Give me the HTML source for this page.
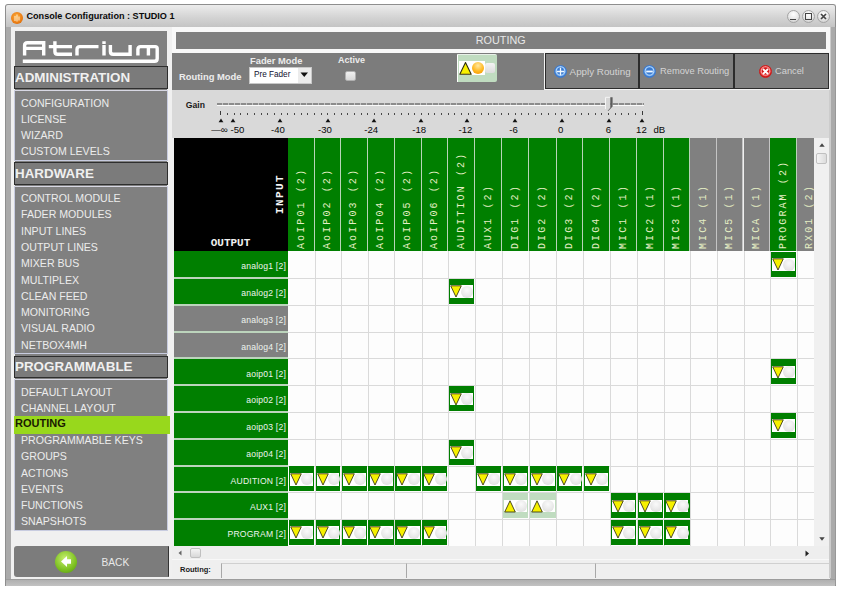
<!DOCTYPE html><html><head><meta charset="utf-8"><style>
html,body{margin:0;padding:0;}
body{width:842px;height:594px;overflow:hidden;position:relative;background:#fff;font-family:"Liberation Sans",sans-serif;}
div{position:absolute;box-sizing:border-box;}
.t{white-space:nowrap;line-height:1;}
</style></head><body>
<div style="left:5px;top:4px;width:831px;height:582px;background:#aaaaaa;border:1px solid #8e8e8e;border-bottom:0;border-radius:3px 3px 0 0;"></div>
<div style="left:6px;top:5px;width:829px;height:22px;background:linear-gradient(#ececec,#d2d2d2 60%,#c4c4c4);border-radius:2px 2px 0 0;"></div>
<div style="left:11px;top:27px;width:819px;height:552px;background:#f0f0f0;"></div>
<div style="left:6px;top:579px;width:829px;height:7px;background:linear-gradient(#9c9c9c 0 1px,#b0b0b0 1px,#c2c2c2);"></div>
<div style="left:829px;top:27px;width:1.5px;height:551px;background:#cccccc;"></div>
<div style="left:834.5px;top:27px;width:1px;height:558px;background:#989898;"></div>
<div style="left:11px;top:11.5px;width:12px;height:12px;border-radius:50%;background:radial-gradient(circle at 45% 40%,#ffb040,#e87810 65%,#b85800);"></div>
<svg style="position:absolute;left:11px;top:11.5px" width="12" height="12"><path d="M4 4V9M6 2.5V9.5M8 4.5V8.5" stroke="#fff4e0" stroke-width="1.1" opacity="0.85"/></svg>
<div class="t" style="left:26.5px;top:12px;font-weight:bold;font-size:9.1px;color:#0a0a0a;">Console Configuration : STUDIO 1</div>
<div style="left:786.5px;top:9.5px;width:13px;height:13px;border-radius:50%;background:radial-gradient(circle at 50% 30%,#ffffff,#e6e6e6 55%,#c4c4c4);border:1px solid #a4a4a4;"></div>
<div style="left:802.0px;top:9.5px;width:13px;height:13px;border-radius:50%;background:radial-gradient(circle at 50% 30%,#ffffff,#e6e6e6 55%,#c4c4c4);border:1px solid #a4a4a4;"></div>
<div style="left:817.0px;top:9.5px;width:13px;height:13px;border-radius:50%;background:radial-gradient(circle at 50% 30%,#ffffff,#e6e6e6 55%,#c4c4c4);border:1px solid #a4a4a4;"></div>
<div style="left:790.3px;top:18.5px;width:5.5px;height:1.6px;background:#444;"></div>
<div style="left:805px;top:13px;width:7px;height:6.5px;border:1.2px solid #444;border-top-width:1.8px;"></div>
<svg style="position:absolute;left:819px;top:11.5px" width="9" height="9"><path d="M2 2L7 7M7 2L2 7" stroke="#444" stroke-width="1.7"/></svg>
<div style="left:15px;top:31px;width:152px;height:500px;background:#808080;"></div>
<svg style="position:absolute;left:14px;top:31px" width="154" height="36" viewBox="14 31 154 36">
<g fill="none" stroke="#fff" stroke-width="3.4" stroke-linecap="butt">
<path d="M24.6 55.6V45.6Q24.6 42.8 27.4 42.8H43.7V55.6M24.6 48.4H43.7"/>
<path d="M48.8 46.6H72M54.9 41.2V51.4Q54.9 54.2 57.7 54.2H72"/>
<path d="M77 55.6V49.4Q77 46.6 79.8 46.6H98.5"/>
<path d="M104 45V55.6M104 41.2V44.1"/>
<path d="M110.4 45V51.4Q110.4 54.2 113.2 54.2H130.1V45"/>
<path d="M137.9 55.6V49.4Q137.9 46.6 140.7 46.6H155.2Q157.2 46.6 157.2 48.6V58.4Q157.2 61.2 154.4 61.2H22.8M148.4 46.6V55.6"/>
</g></svg>
<div style="left:14px;top:66px;width:154px;height:22.5px;background:#7b7b7b;border:1px solid #2e2e2e;"></div>
<div class="t" style="left:15px;top:70.6px;font-weight:bold;font-size:13.4px;color:#f0f0f0;">ADMINISTRATION</div>
<div style="left:14px;top:90px;width:154px;height:71px;background:#808080;border:1px solid #c8cce0;border-top-color:#d8d8e4;"></div>
<div style="left:14px;top:162px;width:154px;height:22.5px;background:#7b7b7b;border:1px solid #2e2e2e;"></div>
<div class="t" style="left:15px;top:166.6px;font-weight:bold;font-size:13.4px;color:#f0f0f0;">HARDWARE</div>
<div style="left:14px;top:186px;width:154px;height:168px;background:#808080;border:1px solid #c8cce0;border-top-color:#d8d8e4;"></div>
<div style="left:14px;top:355.5px;width:154px;height:22.5px;background:#7b7b7b;border:1px solid #2e2e2e;"></div>
<div class="t" style="left:15px;top:360.1px;font-weight:bold;font-size:13.4px;color:#f0f0f0;">PROGRAMMABLE</div>
<div style="left:14px;top:379px;width:154px;height:152px;background:#808080;border:1px solid #c8cce0;border-top-color:#d8d8e4;"></div>
<div class="t" style="left:21px;top:97.8px;font-size:10.6px;color:#ececec;">CONFIGURATION</div>
<div class="t" style="left:21px;top:113.94999999999999px;font-size:10.6px;color:#ececec;">LICENSE</div>
<div class="t" style="left:21px;top:130.1px;font-size:10.6px;color:#ececec;">WIZARD</div>
<div class="t" style="left:21px;top:146.25px;font-size:10.6px;color:#ececec;">CUSTOM LEVELS</div>
<div class="t" style="left:21px;top:193.1px;font-size:10.6px;color:#ececec;">CONTROL MODULE</div>
<div class="t" style="left:21px;top:209.38px;font-size:10.6px;color:#ececec;">FADER MODULES</div>
<div class="t" style="left:21px;top:225.66px;font-size:10.6px;color:#ececec;">INPUT LINES</div>
<div class="t" style="left:21px;top:241.94px;font-size:10.6px;color:#ececec;">OUTPUT LINES</div>
<div class="t" style="left:21px;top:258.22px;font-size:10.6px;color:#ececec;">MIXER BUS</div>
<div class="t" style="left:21px;top:274.5px;font-size:10.6px;color:#ececec;">MULTIPLEX</div>
<div class="t" style="left:21px;top:290.78000000000003px;font-size:10.6px;color:#ececec;">CLEAN FEED</div>
<div class="t" style="left:21px;top:307.06000000000006px;font-size:10.6px;color:#ececec;">MONITORING</div>
<div class="t" style="left:21px;top:323.34000000000003px;font-size:10.6px;color:#ececec;">VISUAL RADIO</div>
<div class="t" style="left:21px;top:339.62px;font-size:10.6px;color:#ececec;">NETBOX4MH</div>
<div class="t" style="left:21px;top:386.70000000000005px;font-size:10.6px;color:#ececec;">DEFAULT LAYOUT</div>
<div class="t" style="left:21px;top:402.88000000000005px;font-size:10.6px;color:#ececec;">CHANNEL LAYOUT</div>
<div style="left:14px;top:416px;width:156px;height:17.5px;background:#98d81c;"></div>
<div class="t" style="left:15px;top:418.16px;font-size:11px;font-weight:bold;color:#1a1a00;">ROUTING</div>
<div class="t" style="left:21px;top:435.24000000000007px;font-size:10.6px;color:#ececec;">PROGRAMMABLE KEYS</div>
<div class="t" style="left:21px;top:451.4200000000001px;font-size:10.6px;color:#ececec;">GROUPS</div>
<div class="t" style="left:21px;top:467.6px;font-size:10.6px;color:#ececec;">ACTIONS</div>
<div class="t" style="left:21px;top:483.78000000000003px;font-size:10.6px;color:#ececec;">EVENTS</div>
<div class="t" style="left:21px;top:499.96000000000004px;font-size:10.6px;color:#ececec;">FUNCTIONS</div>
<div class="t" style="left:21px;top:516.14px;font-size:10.6px;color:#ececec;">SNAPSHOTS</div>
<div style="left:14px;top:546px;width:155px;height:31px;background:#7c7c7c;border-right:1.5px solid #343434;border-radius:3px 1px 1px 3px;"></div>
<div style="left:55px;top:550.5px;width:22px;height:22px;border-radius:50%;background:radial-gradient(circle at 45% 35%,#c8f070,#7cc020 60%,#4e9010);"></div>
<svg style="position:absolute;left:58px;top:553px" width="16" height="17"><path d="M3 8.5L9 3V6.2H13V10.8H9V14Z" fill="#fff"/></svg>
<div class="t" style="left:101.5px;top:557.8px;font-size:10.2px;color:#e8e8e8;">BACK</div>
<div style="left:172px;top:27px;width:658px;height:25.5px;background:#f8f8f8;"></div>
<div style="left:176px;top:31.5px;width:650px;height:17px;background:#7f7f7f;"></div>
<div class="t" style="left:475.8px;top:34.5px;font-size:10.8px;color:#e8e8e8;">ROUTING</div>
<div style="left:172px;top:52.5px;width:657px;height:37.5px;background:#7c7c7c;"></div>
<div class="t" style="left:179px;top:72px;font-weight:bold;font-size:9.4px;color:#ececec;">Routing Mode</div>
<div class="t" style="left:250px;top:57px;font-weight:bold;font-size:9.35px;color:#ececec;">Fader Mode</div>
<div style="left:249px;top:66.5px;width:63px;height:17.5px;background:#fff;border:1px solid #c8c8c8;"></div>
<div style="left:297.5px;top:67.5px;width:13.5px;height:15.5px;background:#ececec;"></div>
<svg style="position:absolute;left:300px;top:72px" width="9" height="6"><path d="M0.5 0.5H8L4.25 5Z" fill="#111"/></svg>
<div class="t" style="left:254px;top:71px;font-size:8.2px;color:#101030;">Pre Fader</div>
<div class="t" style="left:338px;top:56px;font-weight:bold;font-size:9px;color:#ececec;">Active</div>
<div style="left:345px;top:70.8px;width:10.5px;height:10px;background:linear-gradient(#f0f0f0,#d8d8d8);border-radius:2px;border:1px solid #b0b0b0;"></div>
<div style="left:456.5px;top:54.2px;width:40.5px;height:28.2px;background:#c0dcc0;border-left:1.5px solid #fff;border-top:1px solid #e8f0e8;border-radius:0 2px 2px 0;"></div>
<div style="left:459px;top:61.4px;width:25.6px;height:13.4px;background:#fff;"></div>
<svg style="position:absolute;left:458px;top:61px" width="40" height="15"><path d="M7.5 1.5L13.2 13.3H1.8Z" fill="#f8f000" stroke="#303010" stroke-width="1.1" stroke-linejoin="round"/></svg>
<div style="left:472.4px;top:61.6px;width:12px;height:12px;border-radius:50%;background:radial-gradient(circle at 50% 30%,#ffe8a0,#ffb820 55%,#f09000);"></div>
<div style="left:485.3px;top:63.4px;width:9.8px;height:9.8px;background:linear-gradient(#f4f4f4,#dcdcdc);border-radius:2px;"></div>
<div style="left:543.5px;top:52.2px;width:286px;height:37.5px;background:#f4f4f4;"></div>
<div style="left:545px;top:53.4px;width:94px;height:36px;background:#7f7f7f;border:1.5px solid #2c2c2c;"></div>
<div style="left:639px;top:53.4px;width:95px;height:36px;background:#7f7f7f;border:1.5px solid #2c2c2c;"></div>
<div style="left:734px;top:53.4px;width:95px;height:36px;background:#7f7f7f;border:1.5px solid #2c2c2c;"></div>
<div style="left:553.5px;top:64.6px;width:13px;height:13px;border-radius:50%;background:radial-gradient(circle at 50% 45%,#3a7ad0 0 38%,#b0d8ff 52%,#3a7ad0 70%);border:1px solid #3a7ad0;"></div>
<svg style="position:absolute;left:553.5px;top:64.6px" width="13" height="13"><path d="M6.5 2.8V10.2M2.8 6.5H10.2" stroke="#f0f8ff" stroke-width="1.3"/></svg>
<div class="t" style="left:569.6px;top:66.5px;font-size:9.8px;color:#d4d4d4;">Apply Routing</div>
<div style="left:643.1px;top:64.6px;width:13px;height:13px;border-radius:50%;background:radial-gradient(circle at 50% 45%,#3a7ad0 0 38%,#b0d8ff 52%,#3a7ad0 70%);border:1px solid #3a7ad0;"></div>
<svg style="position:absolute;left:643.1px;top:64.6px" width="13" height="13"><path d="M3.2 6.5H9.8" stroke="#f0f8ff" stroke-width="1.8"/></svg>
<div class="t" style="left:660px;top:66.8px;font-size:9.3px;color:#d4d4d4;">Remove Routing</div>
<div style="left:758.5px;top:64.6px;width:13px;height:13px;border-radius:50%;background:radial-gradient(circle at 50% 45%,#d01818 0 38%,#ff9a9a 52%,#d01818 70%);border:1px solid #d01818;"></div>
<svg style="position:absolute;left:758.5px;top:64.6px" width="13" height="13"><path d="M4 4L9 9M9 4L4 9" stroke="#fff" stroke-width="1.8"/></svg>
<div class="t" style="left:775px;top:66.8px;font-size:9.3px;color:#d4d4d4;">Cancel</div>
<div style="left:172px;top:90px;width:657px;height:47.5px;background:#d9d9d9;"></div>
<div class="t" style="left:185.8px;top:100.8px;font-weight:bold;font-size:8.6px;color:#1a1a1a;">Gain</div>
<div style="left:217px;top:103px;width:427px;height:1.5px;background:repeating-linear-gradient(90deg,#8c8c8c 0 5px,#c4c4c4 5px 6px);"></div>
<div style="left:217px;top:104.5px;width:427px;height:1.5px;background:#fafafa;"></div>
<div style="left:220px;top:110.5px;width:1px;height:4.5px;background:#3a3a3a;"></div>
<div style="left:227px;top:112.5px;width:1px;height:2px;background:#484848;"></div>
<div style="left:234px;top:112.5px;width:1px;height:2px;background:#484848;"></div>
<div style="left:240px;top:112.5px;width:1px;height:2px;background:#484848;"></div>
<div style="left:247px;top:112.5px;width:1px;height:2px;background:#484848;"></div>
<div style="left:254px;top:112.5px;width:1px;height:2px;background:#484848;"></div>
<div style="left:261px;top:112.5px;width:1px;height:2px;background:#484848;"></div>
<div style="left:267px;top:112.5px;width:1px;height:2px;background:#484848;"></div>
<div style="left:274px;top:112.5px;width:1px;height:2px;background:#484848;"></div>
<div style="left:281px;top:112.5px;width:1px;height:2px;background:#484848;"></div>
<div style="left:287px;top:112.5px;width:1px;height:2px;background:#484848;"></div>
<div style="left:294px;top:112.5px;width:1px;height:2px;background:#484848;"></div>
<div style="left:301px;top:112.5px;width:1px;height:2px;background:#484848;"></div>
<div style="left:307px;top:112.5px;width:1px;height:2px;background:#484848;"></div>
<div style="left:314px;top:112.5px;width:1px;height:2px;background:#484848;"></div>
<div style="left:321px;top:112.5px;width:1px;height:2px;background:#484848;"></div>
<div style="left:327px;top:112.5px;width:1px;height:2px;background:#484848;"></div>
<div style="left:334px;top:112.5px;width:1px;height:2px;background:#484848;"></div>
<div style="left:341px;top:112.5px;width:1px;height:2px;background:#484848;"></div>
<div style="left:347px;top:112.5px;width:1px;height:2px;background:#484848;"></div>
<div style="left:354px;top:112.5px;width:1px;height:2px;background:#484848;"></div>
<div style="left:361px;top:112.5px;width:1px;height:2px;background:#484848;"></div>
<div style="left:367px;top:112.5px;width:1px;height:2px;background:#484848;"></div>
<div style="left:374px;top:112.5px;width:1px;height:2px;background:#484848;"></div>
<div style="left:381px;top:112.5px;width:1px;height:2px;background:#484848;"></div>
<div style="left:388px;top:112.5px;width:1px;height:2px;background:#484848;"></div>
<div style="left:394px;top:112.5px;width:1px;height:2px;background:#484848;"></div>
<div style="left:401px;top:112.5px;width:1px;height:2px;background:#484848;"></div>
<div style="left:408px;top:112.5px;width:1px;height:2px;background:#484848;"></div>
<div style="left:414px;top:112.5px;width:1px;height:2px;background:#484848;"></div>
<div style="left:421px;top:112.5px;width:1px;height:2px;background:#484848;"></div>
<div style="left:428px;top:112.5px;width:1px;height:2px;background:#484848;"></div>
<div style="left:434px;top:112.5px;width:1px;height:2px;background:#484848;"></div>
<div style="left:441px;top:112.5px;width:1px;height:2px;background:#484848;"></div>
<div style="left:448px;top:112.5px;width:1px;height:2px;background:#484848;"></div>
<div style="left:454px;top:112.5px;width:1px;height:2px;background:#484848;"></div>
<div style="left:461px;top:112.5px;width:1px;height:2px;background:#484848;"></div>
<div style="left:468px;top:112.5px;width:1px;height:2px;background:#484848;"></div>
<div style="left:474px;top:112.5px;width:1px;height:2px;background:#484848;"></div>
<div style="left:481px;top:112.5px;width:1px;height:2px;background:#484848;"></div>
<div style="left:488px;top:112.5px;width:1px;height:2px;background:#484848;"></div>
<div style="left:494px;top:112.5px;width:1px;height:2px;background:#484848;"></div>
<div style="left:501px;top:112.5px;width:1px;height:2px;background:#484848;"></div>
<div style="left:508px;top:112.5px;width:1px;height:2px;background:#484848;"></div>
<div style="left:515px;top:112.5px;width:1px;height:2px;background:#484848;"></div>
<div style="left:521px;top:112.5px;width:1px;height:2px;background:#484848;"></div>
<div style="left:528px;top:112.5px;width:1px;height:2px;background:#484848;"></div>
<div style="left:535px;top:112.5px;width:1px;height:2px;background:#484848;"></div>
<div style="left:541px;top:112.5px;width:1px;height:2px;background:#484848;"></div>
<div style="left:548px;top:112.5px;width:1px;height:2px;background:#484848;"></div>
<div style="left:555px;top:112.5px;width:1px;height:2px;background:#484848;"></div>
<div style="left:561px;top:112.5px;width:1px;height:2px;background:#484848;"></div>
<div style="left:568px;top:112.5px;width:1px;height:2px;background:#484848;"></div>
<div style="left:575px;top:112.5px;width:1px;height:2px;background:#484848;"></div>
<div style="left:581px;top:112.5px;width:1px;height:2px;background:#484848;"></div>
<div style="left:588px;top:112.5px;width:1px;height:2px;background:#484848;"></div>
<div style="left:595px;top:112.5px;width:1px;height:2px;background:#484848;"></div>
<div style="left:601px;top:112.5px;width:1px;height:2px;background:#484848;"></div>
<div style="left:608px;top:112.5px;width:1px;height:2px;background:#484848;"></div>
<div style="left:615px;top:112.5px;width:1px;height:2px;background:#484848;"></div>
<div style="left:621px;top:112.5px;width:1px;height:2px;background:#484848;"></div>
<div style="left:628px;top:112.5px;width:1px;height:2px;background:#484848;"></div>
<div style="left:635px;top:112.5px;width:1px;height:2px;background:#484848;"></div>
<div style="left:642px;top:110.5px;width:1px;height:4.5px;background:#3a3a3a;"></div>
<svg style="position:absolute;left:218.2px;top:117.8px" width="6" height="5"><path d="M3 0.5L5.4 4.3H0.6Z" fill="#111"/></svg>
<svg style="position:absolute;left:230px;top:117.8px" width="6" height="5"><path d="M3 0.5L5.4 4.3H0.6Z" fill="#111"/></svg>
<svg style="position:absolute;left:277px;top:117.8px" width="6" height="5"><path d="M3 0.5L5.4 4.3H0.6Z" fill="#111"/></svg>
<svg style="position:absolute;left:324.6px;top:117.8px" width="6" height="5"><path d="M3 0.5L5.4 4.3H0.6Z" fill="#111"/></svg>
<svg style="position:absolute;left:370.9px;top:117.8px" width="6" height="5"><path d="M3 0.5L5.4 4.3H0.6Z" fill="#111"/></svg>
<svg style="position:absolute;left:417.8px;top:117.8px" width="6" height="5"><path d="M3 0.5L5.4 4.3H0.6Z" fill="#111"/></svg>
<svg style="position:absolute;left:464px;top:117.8px" width="6" height="5"><path d="M3 0.5L5.4 4.3H0.6Z" fill="#111"/></svg>
<svg style="position:absolute;left:511.5px;top:117.8px" width="6" height="5"><path d="M3 0.5L5.4 4.3H0.6Z" fill="#111"/></svg>
<svg style="position:absolute;left:558.5px;top:117.8px" width="6" height="5"><path d="M3 0.5L5.4 4.3H0.6Z" fill="#111"/></svg>
<svg style="position:absolute;left:605.5px;top:117.8px" width="6" height="5"><path d="M3 0.5L5.4 4.3H0.6Z" fill="#111"/></svg>
<svg style="position:absolute;left:638.5px;top:117.8px" width="6" height="5"><path d="M3 0.5L5.4 4.3H0.6Z" fill="#111"/></svg>
<div class="t" style="left:211.2px;top:125px;font-size:9.6px;color:#080808;">&#8212;&#8734;</div>
<div class="t" style="left:230.5px;top:125px;font-size:9.6px;color:#080808;">-50</div>
<div class="t" style="left:271px;top:125px;font-size:9.6px;color:#080808;">-40</div>
<div class="t" style="left:318px;top:125px;font-size:9.6px;color:#080808;">-30</div>
<div class="t" style="left:364.2px;top:125px;font-size:9.6px;color:#080808;">-24</div>
<div class="t" style="left:412.3px;top:125px;font-size:9.6px;color:#080808;">-18</div>
<div class="t" style="left:458.5px;top:125px;font-size:9.6px;color:#080808;">-12</div>
<div class="t" style="left:509.2px;top:125px;font-size:9.6px;color:#080808;">-6</div>
<div class="t" style="left:558.1px;top:125px;font-size:9.6px;color:#080808;">0</div>
<div class="t" style="left:605.8px;top:125px;font-size:9.6px;color:#080808;">6</div>
<div class="t" style="left:636.1px;top:125px;font-size:9.6px;color:#080808;">12</div>
<div class="t" style="left:653.4px;top:125px;font-size:9.6px;color:#080808;">dB</div>
<svg style="position:absolute;left:604px;top:96px" width="10" height="16"><path d="M1.5 1.3H6.3V11.8L3.8 15L1.5 12.8Z" fill="#d6d6d6"/><path d="M1.5 13V1.3H6.3" fill="none" stroke="#f6f6f6" stroke-width="1"/><path d="M6.3 1.3H8.6V10.6L4.3 15H3.6L6.3 11.8Z" fill="#5c5c5c"/></svg>
<div style="left:174px;top:137.5px;width:114px;height:113.5px;background:#000;"></div>
<div class="t" style="left:210.7px;top:237.8px;font-family:'Liberation Mono',monospace;font-weight:bold;font-size:11px;color:#f0f0f0;">OUTPUT</div>
<div class="t" style="left:275.3px;top:213.5px;transform-origin:0 0;transform:rotate(-90deg);font-family:'Liberation Mono',monospace;font-weight:bold;font-size:11px;letter-spacing:1.4px;color:#f4f4f4;">INPUT</div>
<div style="left:288px;top:137.5px;width:526px;height:113.5px;overflow:hidden;">
<div style="left:0px;top:0;width:27px;height:113.5px;background:#007f00;border-right:1.5px solid #b8d4b8;"></div>
<div class="t" style="left:8.7px;top:111px;transform-origin:0 0;transform:rotate(-90deg);font-family:'Liberation Mono',monospace;font-size:10px;letter-spacing:2.1px;color:#e4eec4;">AoIP01 (2)</div>
<div style="left:27px;top:0;width:26px;height:113.5px;background:#007f00;border-right:1.5px solid #b8d4b8;"></div>
<div class="t" style="left:35.2px;top:111px;transform-origin:0 0;transform:rotate(-90deg);font-family:'Liberation Mono',monospace;font-size:10px;letter-spacing:2.1px;color:#e4eec4;">AoIP02 (2)</div>
<div style="left:53px;top:0;width:26.5px;height:113.5px;background:#007f00;border-right:1.5px solid #b8d4b8;"></div>
<div class="t" style="left:61.45px;top:111px;transform-origin:0 0;transform:rotate(-90deg);font-family:'Liberation Mono',monospace;font-size:10px;letter-spacing:2.1px;color:#e4eec4;">AoIP03 (2)</div>
<div style="left:79.5px;top:0;width:27.0px;height:113.5px;background:#007f00;border-right:1.5px solid #b8d4b8;"></div>
<div class="t" style="left:88.2px;top:111px;transform-origin:0 0;transform:rotate(-90deg);font-family:'Liberation Mono',monospace;font-size:10px;letter-spacing:2.1px;color:#e4eec4;">AoIP04 (2)</div>
<div style="left:106.5px;top:0;width:27.0px;height:113.5px;background:#007f00;border-right:1.5px solid #b8d4b8;"></div>
<div class="t" style="left:115.2px;top:111px;transform-origin:0 0;transform:rotate(-90deg);font-family:'Liberation Mono',monospace;font-size:10px;letter-spacing:2.1px;color:#e4eec4;">AoIP05 (2)</div>
<div style="left:133.5px;top:0;width:26.69999999999999px;height:113.5px;background:#007f00;border-right:1.5px solid #b8d4b8;"></div>
<div class="t" style="left:142.04999999999998px;top:111px;transform-origin:0 0;transform:rotate(-90deg);font-family:'Liberation Mono',monospace;font-size:10px;letter-spacing:2.1px;color:#e4eec4;">AoIP06 (2)</div>
<div style="left:160.2px;top:0;width:26.80000000000001px;height:113.5px;background:#007f00;border-right:1.5px solid #b8d4b8;"></div>
<div class="t" style="left:168.79999999999998px;top:111px;transform-origin:0 0;transform:rotate(-90deg);font-family:'Liberation Mono',monospace;font-size:10px;letter-spacing:2.1px;color:#e4eec4;">AUDITION (2)</div>
<div style="left:187px;top:0;width:27px;height:113.5px;background:#007f00;border-right:1.5px solid #b8d4b8;"></div>
<div class="t" style="left:195.7px;top:111px;transform-origin:0 0;transform:rotate(-90deg);font-family:'Liberation Mono',monospace;font-size:10px;letter-spacing:2.1px;color:#e4eec4;">AUX1 (2)</div>
<div style="left:214px;top:0;width:27px;height:113.5px;background:#007f00;border-right:1.5px solid #b8d4b8;"></div>
<div class="t" style="left:222.7px;top:111px;transform-origin:0 0;transform:rotate(-90deg);font-family:'Liberation Mono',monospace;font-size:10px;letter-spacing:2.1px;color:#e4eec4;">DIG1 (2)</div>
<div style="left:241px;top:0;width:27.5px;height:113.5px;background:#007f00;border-right:1.5px solid #b8d4b8;"></div>
<div class="t" style="left:249.95px;top:111px;transform-origin:0 0;transform:rotate(-90deg);font-family:'Liberation Mono',monospace;font-size:10px;letter-spacing:2.1px;color:#e4eec4;">DIG2 (2)</div>
<div style="left:268.5px;top:0;width:26.5px;height:113.5px;background:#007f00;border-right:1.5px solid #b8d4b8;"></div>
<div class="t" style="left:276.95px;top:111px;transform-origin:0 0;transform:rotate(-90deg);font-family:'Liberation Mono',monospace;font-size:10px;letter-spacing:2.1px;color:#e4eec4;">DIG3 (2)</div>
<div style="left:295px;top:0;width:27px;height:113.5px;background:#007f00;border-right:1.5px solid #b8d4b8;"></div>
<div class="t" style="left:303.7px;top:111px;transform-origin:0 0;transform:rotate(-90deg);font-family:'Liberation Mono',monospace;font-size:10px;letter-spacing:2.1px;color:#e4eec4;">DIG4 (2)</div>
<div style="left:322px;top:0;width:27px;height:113.5px;background:#007f00;border-right:1.5px solid #b8d4b8;"></div>
<div class="t" style="left:330.7px;top:111px;transform-origin:0 0;transform:rotate(-90deg);font-family:'Liberation Mono',monospace;font-size:10px;letter-spacing:2.1px;color:#e4eec4;">MIC1 (1)</div>
<div style="left:349px;top:0;width:26.600000000000023px;height:113.5px;background:#007f00;border-right:1.5px solid #b8d4b8;"></div>
<div class="t" style="left:357.5px;top:111px;transform-origin:0 0;transform:rotate(-90deg);font-family:'Liberation Mono',monospace;font-size:10px;letter-spacing:2.1px;color:#e4eec4;">MIC2 (1)</div>
<div style="left:375.6px;top:0;width:26.799999999999955px;height:113.5px;background:#007f00;border-right:1.5px solid #b8d4b8;"></div>
<div class="t" style="left:384.2px;top:111px;transform-origin:0 0;transform:rotate(-90deg);font-family:'Liberation Mono',monospace;font-size:10px;letter-spacing:2.1px;color:#e4eec4;">MIC3 (1)</div>
<div style="left:402.4px;top:0;width:26.399999999999977px;height:113.5px;background:#808080;border-right:1.5px solid #c4c4c4;"></div>
<div class="t" style="left:410.79999999999995px;top:111px;transform-origin:0 0;transform:rotate(-90deg);font-family:'Liberation Mono',monospace;font-size:10px;letter-spacing:2.1px;color:#e4eec4;">MIC4 (1)</div>
<div style="left:428.79999999999995px;top:0;width:26.700000000000045px;height:113.5px;background:#808080;border-right:1.5px solid #c4c4c4;"></div>
<div class="t" style="left:437.34999999999997px;top:111px;transform-origin:0 0;transform:rotate(-90deg);font-family:'Liberation Mono',monospace;font-size:10px;letter-spacing:2.1px;color:#e4eec4;">MIC5 (1)</div>
<div style="left:455.5px;top:0;width:26.700000000000045px;height:113.5px;background:#808080;border-right:1.5px solid #c4c4c4;"></div>
<div class="t" style="left:464.05px;top:111px;transform-origin:0 0;transform:rotate(-90deg);font-family:'Liberation Mono',monospace;font-size:10px;letter-spacing:2.1px;color:#e4eec4;">MICA (1)</div>
<div style="left:482.20000000000005px;top:0;width:26.399999999999977px;height:113.5px;background:#007f00;border-right:1.5px solid #b8d4b8;"></div>
<div class="t" style="left:490.6px;top:111px;transform-origin:0 0;transform:rotate(-90deg);font-family:'Liberation Mono',monospace;font-size:10px;letter-spacing:2.1px;color:#e4eec4;">PROGRAM (2)</div>
<div style="left:508.6px;top:0;width:26.799999999999955px;height:113.5px;background:#808080;border-right:1.5px solid #c4c4c4;"></div>
<div class="t" style="left:517.2px;top:111px;transform-origin:0 0;transform:rotate(-90deg);font-family:'Liberation Mono',monospace;font-size:10px;letter-spacing:2.1px;color:#e4eec4;">RX01 (2)</div>
</div>
<div style="left:288px;top:251px;width:526px;height:295px;background:#fdfdfd;"></div>
<div style="left:173.5px;top:251px;width:114.5px;height:28px;background:#007f00;"></div>
<div class="t" style="right:556px;top:262.1px;font-size:8.6px;letter-spacing:0.2px;color:#eef4ee;">analog1 [2]</div>
<div style="left:173.5px;top:278px;width:114.5px;height:28px;background:#007f00;"></div>
<div class="t" style="right:556px;top:289.1px;font-size:8.6px;letter-spacing:0.2px;color:#eef4ee;">analog2 [2]</div>
<div style="left:173.5px;top:305px;width:114.5px;height:27.80000000000001px;background:#808080;"></div>
<div class="t" style="right:556px;top:316.0px;font-size:8.6px;letter-spacing:0.2px;color:#eef4ee;">analog3 [2]</div>
<div style="left:173.5px;top:331.8px;width:114.5px;height:27.69999999999999px;background:#808080;"></div>
<div class="t" style="right:556px;top:342.75px;font-size:8.6px;letter-spacing:0.2px;color:#eef4ee;">analog4 [2]</div>
<div style="left:173.5px;top:358.5px;width:114.5px;height:27.80000000000001px;background:#007f00;"></div>
<div class="t" style="right:556px;top:369.5px;font-size:8.6px;letter-spacing:0.2px;color:#eef4ee;">aoip01 [2]</div>
<div style="left:173.5px;top:385.3px;width:114.5px;height:27.69999999999999px;background:#007f00;"></div>
<div class="t" style="right:556px;top:396.25px;font-size:8.6px;letter-spacing:0.2px;color:#eef4ee;">aoip02 [2]</div>
<div style="left:173.5px;top:412px;width:114.5px;height:27.80000000000001px;background:#007f00;"></div>
<div class="t" style="right:556px;top:423.0px;font-size:8.6px;letter-spacing:0.2px;color:#eef4ee;">aoip03 [2]</div>
<div style="left:173.5px;top:438.8px;width:114.5px;height:27.80000000000001px;background:#007f00;"></div>
<div class="t" style="right:556px;top:449.80000000000007px;font-size:8.6px;letter-spacing:0.2px;color:#eef4ee;">aoip04 [2]</div>
<div style="left:173.5px;top:465.6px;width:114.5px;height:27.599999999999966px;background:#007f00;"></div>
<div class="t" style="right:556px;top:476.5px;font-size:8.6px;letter-spacing:0.2px;color:#eef4ee;">AUDITION [2]</div>
<div style="left:173.5px;top:492.2px;width:114.5px;height:27.599999999999966px;background:#007f00;"></div>
<div class="t" style="right:556px;top:503.1px;font-size:8.6px;letter-spacing:0.2px;color:#eef4ee;">AUX1 [2]</div>
<div style="left:173.5px;top:518.8px;width:114.5px;height:28.0px;background:#007f00;"></div>
<div class="t" style="right:556px;top:529.9px;font-size:8.6px;letter-spacing:0.2px;color:#eef4ee;">PROGRAM [2]</div>
<div style="left:173.5px;top:277px;width:114.5px;height:2px;background:#bcd4bc;"></div>
<div style="left:173.5px;top:304px;width:114.5px;height:2px;background:#bcd4bc;"></div>
<div style="left:173.5px;top:331px;width:114.5px;height:2px;background:#bcd4bc;"></div>
<div style="left:173.5px;top:357px;width:114.5px;height:2px;background:#bcd4bc;"></div>
<div style="left:173.5px;top:384px;width:114.5px;height:2px;background:#bcd4bc;"></div>
<div style="left:173.5px;top:411px;width:114.5px;height:2px;background:#bcd4bc;"></div>
<div style="left:173.5px;top:438px;width:114.5px;height:2px;background:#bcd4bc;"></div>
<div style="left:173.5px;top:465px;width:114.5px;height:2px;background:#bcd4bc;"></div>
<div style="left:173.5px;top:491px;width:114.5px;height:2px;background:#bcd4bc;"></div>
<div style="left:173.5px;top:518px;width:114.5px;height:2px;background:#bcd4bc;"></div>
<div style="left:314.5px;top:251px;width:1px;height:295px;background:#dadada;"></div>
<div style="left:340.5px;top:251px;width:1px;height:295px;background:#dadada;"></div>
<div style="left:367.5px;top:251px;width:1px;height:295px;background:#dadada;"></div>
<div style="left:393.5px;top:251px;width:1px;height:295px;background:#dadada;"></div>
<div style="left:421.5px;top:251px;width:1px;height:295px;background:#dadada;"></div>
<div style="left:447.5px;top:251px;width:1px;height:295px;background:#dadada;"></div>
<div style="left:474.5px;top:251px;width:1px;height:295px;background:#dadada;"></div>
<div style="left:501.5px;top:251px;width:1px;height:295px;background:#dadada;"></div>
<div style="left:528.5px;top:251px;width:1px;height:295px;background:#dadada;"></div>
<div style="left:555.5px;top:251px;width:1px;height:295px;background:#dadada;"></div>
<div style="left:582.5px;top:251px;width:1px;height:295px;background:#dadada;"></div>
<div style="left:609.5px;top:251px;width:1px;height:295px;background:#dadada;"></div>
<div style="left:636.5px;top:251px;width:1px;height:295px;background:#dadada;"></div>
<div style="left:663.5px;top:251px;width:1px;height:295px;background:#dadada;"></div>
<div style="left:689.5px;top:251px;width:1px;height:295px;background:#dadada;"></div>
<div style="left:716.5px;top:251px;width:1px;height:295px;background:#dadada;"></div>
<div style="left:743.5px;top:251px;width:1px;height:295px;background:#dadada;"></div>
<div style="left:769.5px;top:251px;width:1px;height:295px;background:#dadada;"></div>
<div style="left:796.5px;top:251px;width:1px;height:295px;background:#dadada;"></div>
<div style="left:288px;top:277.5px;width:526px;height:1px;background:#dadada;"></div>
<div style="left:288px;top:304.5px;width:526px;height:1px;background:#dadada;"></div>
<div style="left:288px;top:331.5px;width:526px;height:1px;background:#dadada;"></div>
<div style="left:288px;top:357.5px;width:526px;height:1px;background:#dadada;"></div>
<div style="left:288px;top:384.5px;width:526px;height:1px;background:#dadada;"></div>
<div style="left:288px;top:411.5px;width:526px;height:1px;background:#dadada;"></div>
<div style="left:288px;top:438.5px;width:526px;height:1px;background:#dadada;"></div>
<div style="left:288px;top:465.5px;width:526px;height:1px;background:#dadada;"></div>
<div style="left:288px;top:491.5px;width:526px;height:1px;background:#dadada;"></div>
<div style="left:288px;top:518.5px;width:526px;height:1px;background:#dadada;"></div>
<div style="left:771.0px;top:251.8px;width:24.800000000000068px;height:25.399999999999977px;background:#007f00;"></div>
<div style="left:772.2px;top:258.4px;width:22.40000000000007px;height:12.5px;background:#fff;"></div>
<svg style="position:absolute;left:772.0px;top:258.4px" width="12" height="13"><path d="M0.7 0.8H11.3L6 12Z" fill="#f6f000" stroke="#3a3a18" stroke-width="0.9" stroke-linejoin="round"/></svg>
<div style="left:783.4px;top:258.7px;width:12px;height:12px;border-radius:50%;background:radial-gradient(circle at 50% 35%,#fafafa,#e4e4e4 70%,#d0d0d0);"></div>
<div style="left:449.0px;top:278.8px;width:25.19999999999999px;height:25.399999999999977px;background:#007f00;"></div>
<div style="left:450.2px;top:285.4px;width:22.79999999999999px;height:12.5px;background:#fff;"></div>
<svg style="position:absolute;left:450.0px;top:285.4px" width="12" height="13"><path d="M0.7 0.8H11.3L6 12Z" fill="#f6f000" stroke="#3a3a18" stroke-width="0.9" stroke-linejoin="round"/></svg>
<div style="left:461.4px;top:285.7px;width:12px;height:12px;border-radius:50%;background:radial-gradient(circle at 50% 35%,#fafafa,#e4e4e4 70%,#d0d0d0);"></div>
<div style="left:771.0px;top:359.3px;width:24.800000000000068px;height:25.19999999999999px;background:#007f00;"></div>
<div style="left:772.2px;top:365.9px;width:22.40000000000007px;height:12.5px;background:#fff;"></div>
<svg style="position:absolute;left:772.0px;top:365.9px" width="12" height="13"><path d="M0.7 0.8H11.3L6 12Z" fill="#f6f000" stroke="#3a3a18" stroke-width="0.9" stroke-linejoin="round"/></svg>
<div style="left:783.4px;top:366.2px;width:12px;height:12px;border-radius:50%;background:radial-gradient(circle at 50% 35%,#fafafa,#e4e4e4 70%,#d0d0d0);"></div>
<div style="left:449.0px;top:386.1px;width:25.19999999999999px;height:25.099999999999966px;background:#007f00;"></div>
<div style="left:450.2px;top:392.7px;width:22.79999999999999px;height:12.5px;background:#fff;"></div>
<svg style="position:absolute;left:450.0px;top:392.7px" width="12" height="13"><path d="M0.7 0.8H11.3L6 12Z" fill="#f6f000" stroke="#3a3a18" stroke-width="0.9" stroke-linejoin="round"/></svg>
<div style="left:461.4px;top:393.0px;width:12px;height:12px;border-radius:50%;background:radial-gradient(circle at 50% 35%,#fafafa,#e4e4e4 70%,#d0d0d0);"></div>
<div style="left:771.0px;top:412.8px;width:24.800000000000068px;height:25.19999999999999px;background:#007f00;"></div>
<div style="left:772.2px;top:419.4px;width:22.40000000000007px;height:12.5px;background:#fff;"></div>
<svg style="position:absolute;left:772.0px;top:419.4px" width="12" height="13"><path d="M0.7 0.8H11.3L6 12Z" fill="#f6f000" stroke="#3a3a18" stroke-width="0.9" stroke-linejoin="round"/></svg>
<div style="left:783.4px;top:419.7px;width:12px;height:12px;border-radius:50%;background:radial-gradient(circle at 50% 35%,#fafafa,#e4e4e4 70%,#d0d0d0);"></div>
<div style="left:449.0px;top:439.6px;width:25.19999999999999px;height:25.19999999999999px;background:#007f00;"></div>
<div style="left:450.2px;top:446.2px;width:22.79999999999999px;height:12.5px;background:#fff;"></div>
<svg style="position:absolute;left:450.0px;top:446.2px" width="12" height="13"><path d="M0.7 0.8H11.3L6 12Z" fill="#f6f000" stroke="#3a3a18" stroke-width="0.9" stroke-linejoin="round"/></svg>
<div style="left:461.4px;top:446.5px;width:12px;height:12px;border-radius:50%;background:radial-gradient(circle at 50% 35%,#fafafa,#e4e4e4 70%,#d0d0d0);"></div>
<div style="left:288.8px;top:466.40000000000003px;width:25.399999999999977px;height:24.999999999999943px;background:#007f00;"></div>
<div style="left:290.0px;top:473.0px;width:22.99999999999998px;height:12.5px;background:#fff;"></div>
<svg style="position:absolute;left:289.8px;top:473.0px" width="12" height="13"><path d="M0.7 0.8H11.3L6 12Z" fill="#f6f000" stroke="#3a3a18" stroke-width="0.9" stroke-linejoin="round"/></svg>
<div style="left:301.2px;top:473.3px;width:12px;height:12px;border-radius:50%;background:radial-gradient(circle at 50% 35%,#fafafa,#e4e4e4 70%,#d0d0d0);"></div>
<div style="left:315.8px;top:466.40000000000003px;width:24.399999999999977px;height:24.999999999999943px;background:#007f00;"></div>
<div style="left:317.0px;top:473.0px;width:21.99999999999998px;height:12.5px;background:#fff;"></div>
<svg style="position:absolute;left:316.8px;top:473.0px" width="12" height="13"><path d="M0.7 0.8H11.3L6 12Z" fill="#f6f000" stroke="#3a3a18" stroke-width="0.9" stroke-linejoin="round"/></svg>
<div style="left:328.2px;top:473.3px;width:12px;height:12px;border-radius:50%;background:radial-gradient(circle at 50% 35%,#fafafa,#e4e4e4 70%,#d0d0d0);"></div>
<div style="left:341.8px;top:466.40000000000003px;width:24.899999999999977px;height:24.999999999999943px;background:#007f00;"></div>
<div style="left:343.0px;top:473.0px;width:22.49999999999998px;height:12.5px;background:#fff;"></div>
<svg style="position:absolute;left:342.8px;top:473.0px" width="12" height="13"><path d="M0.7 0.8H11.3L6 12Z" fill="#f6f000" stroke="#3a3a18" stroke-width="0.9" stroke-linejoin="round"/></svg>
<div style="left:354.2px;top:473.3px;width:12px;height:12px;border-radius:50%;background:radial-gradient(circle at 50% 35%,#fafafa,#e4e4e4 70%,#d0d0d0);"></div>
<div style="left:368.3px;top:466.40000000000003px;width:25.399999999999977px;height:24.999999999999943px;background:#007f00;"></div>
<div style="left:369.5px;top:473.0px;width:22.99999999999998px;height:12.5px;background:#fff;"></div>
<svg style="position:absolute;left:369.3px;top:473.0px" width="12" height="13"><path d="M0.7 0.8H11.3L6 12Z" fill="#f6f000" stroke="#3a3a18" stroke-width="0.9" stroke-linejoin="round"/></svg>
<div style="left:380.7px;top:473.3px;width:12px;height:12px;border-radius:50%;background:radial-gradient(circle at 50% 35%,#fafafa,#e4e4e4 70%,#d0d0d0);"></div>
<div style="left:395.3px;top:466.40000000000003px;width:25.399999999999977px;height:24.999999999999943px;background:#007f00;"></div>
<div style="left:396.5px;top:473.0px;width:22.99999999999998px;height:12.5px;background:#fff;"></div>
<svg style="position:absolute;left:396.3px;top:473.0px" width="12" height="13"><path d="M0.7 0.8H11.3L6 12Z" fill="#f6f000" stroke="#3a3a18" stroke-width="0.9" stroke-linejoin="round"/></svg>
<div style="left:407.7px;top:473.3px;width:12px;height:12px;border-radius:50%;background:radial-gradient(circle at 50% 35%,#fafafa,#e4e4e4 70%,#d0d0d0);"></div>
<div style="left:422.3px;top:466.40000000000003px;width:25.099999999999966px;height:24.999999999999943px;background:#007f00;"></div>
<div style="left:423.5px;top:473.0px;width:22.699999999999967px;height:12.5px;background:#fff;"></div>
<svg style="position:absolute;left:423.3px;top:473.0px" width="12" height="13"><path d="M0.7 0.8H11.3L6 12Z" fill="#f6f000" stroke="#3a3a18" stroke-width="0.9" stroke-linejoin="round"/></svg>
<div style="left:434.7px;top:473.3px;width:12px;height:12px;border-radius:50%;background:radial-gradient(circle at 50% 35%,#fafafa,#e4e4e4 70%,#d0d0d0);"></div>
<div style="left:475.8px;top:466.40000000000003px;width:25.399999999999977px;height:24.999999999999943px;background:#007f00;"></div>
<div style="left:477.0px;top:473.0px;width:22.99999999999998px;height:12.5px;background:#fff;"></div>
<svg style="position:absolute;left:476.8px;top:473.0px" width="12" height="13"><path d="M0.7 0.8H11.3L6 12Z" fill="#f6f000" stroke="#3a3a18" stroke-width="0.9" stroke-linejoin="round"/></svg>
<div style="left:488.2px;top:473.3px;width:12px;height:12px;border-radius:50%;background:radial-gradient(circle at 50% 35%,#fafafa,#e4e4e4 70%,#d0d0d0);"></div>
<div style="left:502.8px;top:466.40000000000003px;width:25.400000000000034px;height:24.999999999999943px;background:#007f00;"></div>
<div style="left:504.0px;top:473.0px;width:23.000000000000036px;height:12.5px;background:#fff;"></div>
<svg style="position:absolute;left:503.8px;top:473.0px" width="12" height="13"><path d="M0.7 0.8H11.3L6 12Z" fill="#f6f000" stroke="#3a3a18" stroke-width="0.9" stroke-linejoin="round"/></svg>
<div style="left:515.2px;top:473.3px;width:12px;height:12px;border-radius:50%;background:radial-gradient(circle at 50% 35%,#fafafa,#e4e4e4 70%,#d0d0d0);"></div>
<div style="left:529.8px;top:466.40000000000003px;width:25.90000000000009px;height:24.999999999999943px;background:#007f00;"></div>
<div style="left:531.0px;top:473.0px;width:23.500000000000092px;height:12.5px;background:#fff;"></div>
<svg style="position:absolute;left:530.8px;top:473.0px" width="12" height="13"><path d="M0.7 0.8H11.3L6 12Z" fill="#f6f000" stroke="#3a3a18" stroke-width="0.9" stroke-linejoin="round"/></svg>
<div style="left:542.1999999999999px;top:473.3px;width:12px;height:12px;border-radius:50%;background:radial-gradient(circle at 50% 35%,#fafafa,#e4e4e4 70%,#d0d0d0);"></div>
<div style="left:557.3px;top:466.40000000000003px;width:24.90000000000009px;height:24.999999999999943px;background:#007f00;"></div>
<div style="left:558.5px;top:473.0px;width:22.500000000000092px;height:12.5px;background:#fff;"></div>
<svg style="position:absolute;left:558.3px;top:473.0px" width="12" height="13"><path d="M0.7 0.8H11.3L6 12Z" fill="#f6f000" stroke="#3a3a18" stroke-width="0.9" stroke-linejoin="round"/></svg>
<div style="left:569.6999999999999px;top:473.3px;width:12px;height:12px;border-radius:50%;background:radial-gradient(circle at 50% 35%,#fafafa,#e4e4e4 70%,#d0d0d0);"></div>
<div style="left:583.8px;top:466.40000000000003px;width:25.40000000000009px;height:24.999999999999943px;background:#007f00;"></div>
<div style="left:585.0px;top:473.0px;width:23.000000000000092px;height:12.5px;background:#fff;"></div>
<svg style="position:absolute;left:584.8px;top:473.0px" width="12" height="13"><path d="M0.7 0.8H11.3L6 12Z" fill="#f6f000" stroke="#3a3a18" stroke-width="0.9" stroke-linejoin="round"/></svg>
<div style="left:596.1999999999999px;top:473.3px;width:12px;height:12px;border-radius:50%;background:radial-gradient(circle at 50% 35%,#fafafa,#e4e4e4 70%,#d0d0d0);"></div>
<div style="left:610.8px;top:493.0px;width:25.40000000000009px;height:25.0px;background:#007f00;"></div>
<div style="left:612.0px;top:499.59999999999997px;width:23.000000000000092px;height:12.5px;background:#fff;"></div>
<svg style="position:absolute;left:611.8px;top:499.59999999999997px" width="12" height="13"><path d="M0.7 0.8H11.3L6 12Z" fill="#f6f000" stroke="#3a3a18" stroke-width="0.9" stroke-linejoin="round"/></svg>
<div style="left:623.1999999999999px;top:499.9px;width:12px;height:12px;border-radius:50%;background:radial-gradient(circle at 50% 35%,#fafafa,#e4e4e4 70%,#d0d0d0);"></div>
<div style="left:637.8px;top:493.0px;width:25.000000000000114px;height:25.0px;background:#007f00;"></div>
<div style="left:639.0px;top:499.59999999999997px;width:22.600000000000115px;height:12.5px;background:#fff;"></div>
<svg style="position:absolute;left:638.8px;top:499.59999999999997px" width="12" height="13"><path d="M0.7 0.8H11.3L6 12Z" fill="#f6f000" stroke="#3a3a18" stroke-width="0.9" stroke-linejoin="round"/></svg>
<div style="left:650.1999999999999px;top:499.9px;width:12px;height:12px;border-radius:50%;background:radial-gradient(circle at 50% 35%,#fafafa,#e4e4e4 70%,#d0d0d0);"></div>
<div style="left:664.4px;top:493.0px;width:25.200000000000045px;height:25.0px;background:#007f00;"></div>
<div style="left:665.6px;top:499.59999999999997px;width:22.800000000000047px;height:12.5px;background:#fff;"></div>
<svg style="position:absolute;left:665.4px;top:499.59999999999997px" width="12" height="13"><path d="M0.7 0.8H11.3L6 12Z" fill="#f6f000" stroke="#3a3a18" stroke-width="0.9" stroke-linejoin="round"/></svg>
<div style="left:676.8px;top:499.9px;width:12px;height:12px;border-radius:50%;background:radial-gradient(circle at 50% 35%,#fafafa,#e4e4e4 70%,#d0d0d0);"></div>
<div style="left:288.8px;top:519.5999999999999px;width:25.399999999999977px;height:25.40000000000009px;background:#007f00;"></div>
<div style="left:290.0px;top:526.1999999999999px;width:22.99999999999998px;height:12.5px;background:#fff;"></div>
<svg style="position:absolute;left:289.8px;top:526.1999999999999px" width="12" height="13"><path d="M0.7 0.8H11.3L6 12Z" fill="#f6f000" stroke="#3a3a18" stroke-width="0.9" stroke-linejoin="round"/></svg>
<div style="left:301.2px;top:526.4999999999999px;width:12px;height:12px;border-radius:50%;background:radial-gradient(circle at 50% 35%,#fafafa,#e4e4e4 70%,#d0d0d0);"></div>
<div style="left:315.8px;top:519.5999999999999px;width:24.399999999999977px;height:25.40000000000009px;background:#007f00;"></div>
<div style="left:317.0px;top:526.1999999999999px;width:21.99999999999998px;height:12.5px;background:#fff;"></div>
<svg style="position:absolute;left:316.8px;top:526.1999999999999px" width="12" height="13"><path d="M0.7 0.8H11.3L6 12Z" fill="#f6f000" stroke="#3a3a18" stroke-width="0.9" stroke-linejoin="round"/></svg>
<div style="left:328.2px;top:526.4999999999999px;width:12px;height:12px;border-radius:50%;background:radial-gradient(circle at 50% 35%,#fafafa,#e4e4e4 70%,#d0d0d0);"></div>
<div style="left:341.8px;top:519.5999999999999px;width:24.899999999999977px;height:25.40000000000009px;background:#007f00;"></div>
<div style="left:343.0px;top:526.1999999999999px;width:22.49999999999998px;height:12.5px;background:#fff;"></div>
<svg style="position:absolute;left:342.8px;top:526.1999999999999px" width="12" height="13"><path d="M0.7 0.8H11.3L6 12Z" fill="#f6f000" stroke="#3a3a18" stroke-width="0.9" stroke-linejoin="round"/></svg>
<div style="left:354.2px;top:526.4999999999999px;width:12px;height:12px;border-radius:50%;background:radial-gradient(circle at 50% 35%,#fafafa,#e4e4e4 70%,#d0d0d0);"></div>
<div style="left:368.3px;top:519.5999999999999px;width:25.399999999999977px;height:25.40000000000009px;background:#007f00;"></div>
<div style="left:369.5px;top:526.1999999999999px;width:22.99999999999998px;height:12.5px;background:#fff;"></div>
<svg style="position:absolute;left:369.3px;top:526.1999999999999px" width="12" height="13"><path d="M0.7 0.8H11.3L6 12Z" fill="#f6f000" stroke="#3a3a18" stroke-width="0.9" stroke-linejoin="round"/></svg>
<div style="left:380.7px;top:526.4999999999999px;width:12px;height:12px;border-radius:50%;background:radial-gradient(circle at 50% 35%,#fafafa,#e4e4e4 70%,#d0d0d0);"></div>
<div style="left:395.3px;top:519.5999999999999px;width:25.399999999999977px;height:25.40000000000009px;background:#007f00;"></div>
<div style="left:396.5px;top:526.1999999999999px;width:22.99999999999998px;height:12.5px;background:#fff;"></div>
<svg style="position:absolute;left:396.3px;top:526.1999999999999px" width="12" height="13"><path d="M0.7 0.8H11.3L6 12Z" fill="#f6f000" stroke="#3a3a18" stroke-width="0.9" stroke-linejoin="round"/></svg>
<div style="left:407.7px;top:526.4999999999999px;width:12px;height:12px;border-radius:50%;background:radial-gradient(circle at 50% 35%,#fafafa,#e4e4e4 70%,#d0d0d0);"></div>
<div style="left:422.3px;top:519.5999999999999px;width:25.099999999999966px;height:25.40000000000009px;background:#007f00;"></div>
<div style="left:423.5px;top:526.1999999999999px;width:22.699999999999967px;height:12.5px;background:#fff;"></div>
<svg style="position:absolute;left:423.3px;top:526.1999999999999px" width="12" height="13"><path d="M0.7 0.8H11.3L6 12Z" fill="#f6f000" stroke="#3a3a18" stroke-width="0.9" stroke-linejoin="round"/></svg>
<div style="left:434.7px;top:526.4999999999999px;width:12px;height:12px;border-radius:50%;background:radial-gradient(circle at 50% 35%,#fafafa,#e4e4e4 70%,#d0d0d0);"></div>
<div style="left:610.8px;top:519.5999999999999px;width:25.40000000000009px;height:25.40000000000009px;background:#007f00;"></div>
<div style="left:612.0px;top:526.1999999999999px;width:23.000000000000092px;height:12.5px;background:#fff;"></div>
<svg style="position:absolute;left:611.8px;top:526.1999999999999px" width="12" height="13"><path d="M0.7 0.8H11.3L6 12Z" fill="#f6f000" stroke="#3a3a18" stroke-width="0.9" stroke-linejoin="round"/></svg>
<div style="left:623.1999999999999px;top:526.4999999999999px;width:12px;height:12px;border-radius:50%;background:radial-gradient(circle at 50% 35%,#fafafa,#e4e4e4 70%,#d0d0d0);"></div>
<div style="left:637.8px;top:519.5999999999999px;width:25.000000000000114px;height:25.40000000000009px;background:#007f00;"></div>
<div style="left:639.0px;top:526.1999999999999px;width:22.600000000000115px;height:12.5px;background:#fff;"></div>
<svg style="position:absolute;left:638.8px;top:526.1999999999999px" width="12" height="13"><path d="M0.7 0.8H11.3L6 12Z" fill="#f6f000" stroke="#3a3a18" stroke-width="0.9" stroke-linejoin="round"/></svg>
<div style="left:650.1999999999999px;top:526.4999999999999px;width:12px;height:12px;border-radius:50%;background:radial-gradient(circle at 50% 35%,#fafafa,#e4e4e4 70%,#d0d0d0);"></div>
<div style="left:664.4px;top:519.5999999999999px;width:25.200000000000045px;height:25.40000000000009px;background:#007f00;"></div>
<div style="left:665.6px;top:526.1999999999999px;width:22.800000000000047px;height:12.5px;background:#fff;"></div>
<svg style="position:absolute;left:665.4px;top:526.1999999999999px" width="12" height="13"><path d="M0.7 0.8H11.3L6 12Z" fill="#f6f000" stroke="#3a3a18" stroke-width="0.9" stroke-linejoin="round"/></svg>
<div style="left:676.8px;top:526.4999999999999px;width:12px;height:12px;border-radius:50%;background:radial-gradient(circle at 50% 35%,#fafafa,#e4e4e4 70%,#d0d0d0);"></div>
<div style="left:502.8px;top:493.0px;width:25.400000000000034px;height:25.0px;background:#c0dcc0;"></div>
<div style="left:504.0px;top:499.59999999999997px;width:23.000000000000036px;height:12.5px;background:#fff;"></div>
<svg style="position:absolute;left:503.8px;top:499.59999999999997px" width="12" height="13"><path d="M6 0.8L11.3 12H0.7Z" fill="#f6f000" stroke="#3a3a18" stroke-width="0.9" stroke-linejoin="round"/></svg>
<div style="left:515.2px;top:499.9px;width:12px;height:12px;border-radius:50%;background:radial-gradient(circle at 50% 35%,#fafafa,#e4e4e4 70%,#d0d0d0);"></div>
<div style="left:529.8px;top:493.0px;width:25.90000000000009px;height:25.0px;background:#c0dcc0;"></div>
<div style="left:531.0px;top:499.59999999999997px;width:23.500000000000092px;height:12.5px;background:#fff;"></div>
<svg style="position:absolute;left:530.8px;top:499.59999999999997px" width="12" height="13"><path d="M6 0.8L11.3 12H0.7Z" fill="#f6f000" stroke="#3a3a18" stroke-width="0.9" stroke-linejoin="round"/></svg>
<div style="left:542.1999999999999px;top:499.9px;width:12px;height:12px;border-radius:50%;background:radial-gradient(circle at 50% 35%,#fafafa,#e4e4e4 70%,#d0d0d0);"></div>
<div style="left:814px;top:137.5px;width:15px;height:409px;background:#f0f0f0;"></div>
<svg style="position:absolute;left:819px;top:143px" width="6" height="4"><path d="M3 0.3L5.7 3.7H0.3Z" fill="#444"/></svg>
<div style="left:815.8px;top:152.7px;width:11.5px;height:11.6px;background:linear-gradient(90deg,#f4f4f4,#dcdcdc);border:1px solid #c0c0c0;border-radius:2px;"></div>
<svg style="position:absolute;left:819px;top:537px" width="6" height="4"><path d="M0.3 0.3H5.7L3 3.7Z" fill="#444"/></svg>
<div style="left:172px;top:546px;width:657px;height:13px;background:#eeeeee;"></div>
<svg style="position:absolute;left:178px;top:550px" width="5" height="6"><path d="M3.5 0.5V5.5L0.5 3Z" fill="#666"/></svg>
<div style="left:189.5px;top:547.5px;width:11px;height:10.5px;background:linear-gradient(#f4f4f4,#d8d8d8);border:1px solid #c0c0c0;border-radius:2px;"></div>
<svg style="position:absolute;left:805px;top:549.5px" width="5" height="7"><path d="M0.5 0.5V6.5L4 3.5Z" fill="#222"/></svg>
<div style="left:172px;top:559px;width:657px;height:19px;background:#efefef;border-top:1px solid #f8f8f8;"></div>
<div class="t" style="left:180px;top:565.5px;font-weight:bold;font-size:7.5px;color:#1a1a1a;">Routing:</div>
<div style="left:221px;top:563px;width:186px;height:15px;border-left:1px solid #a8a8a8;border-top:1px solid #d0d0d0;"></div>
<div style="left:406px;top:563px;width:190px;height:15px;border-left:1px solid #a8a8a8;border-top:1px solid #d0d0d0;"></div>
<div style="left:595px;top:563px;width:234px;height:15px;border-left:1px solid #a8a8a8;border-top:1px solid #d0d0d0;"></div>
</body></html>
